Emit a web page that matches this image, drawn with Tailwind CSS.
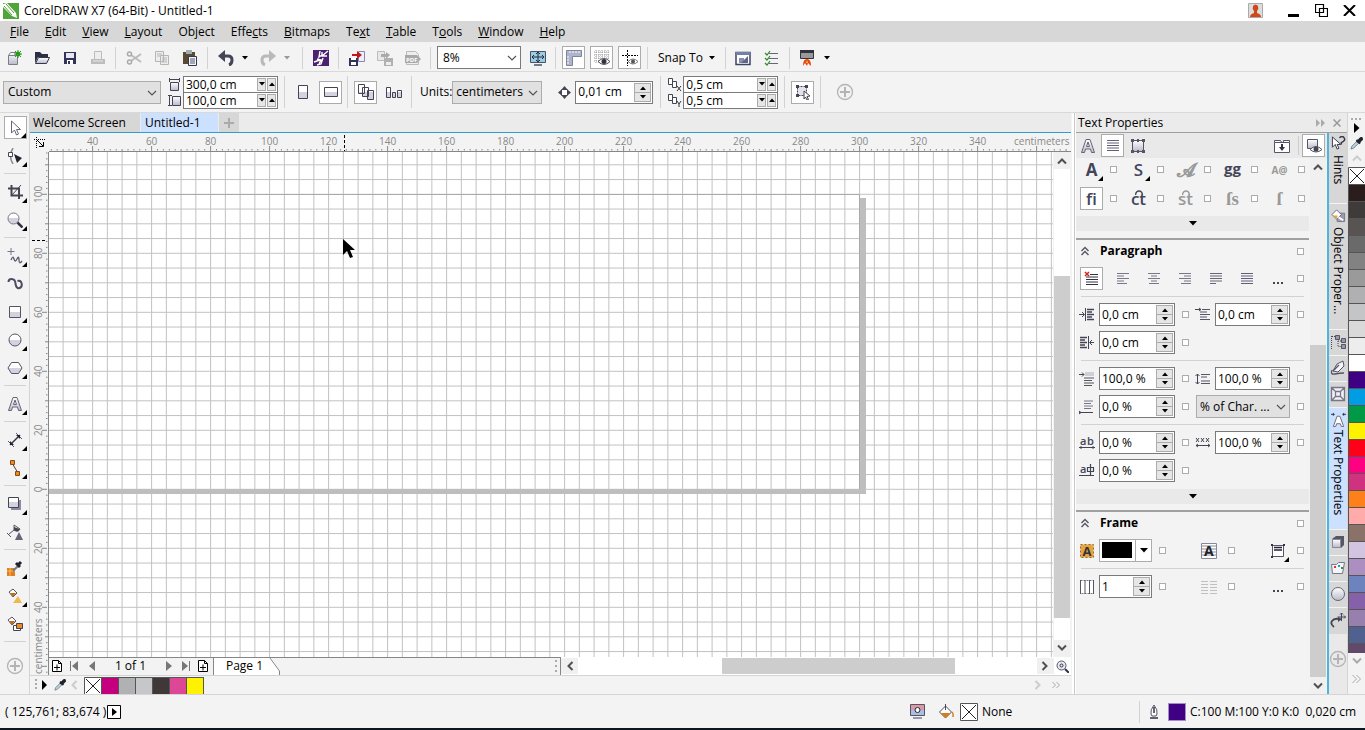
<!DOCTYPE html>
<html lang="en">
<head>
    <meta charset="utf-8">
    <meta name="viewport" content="width=device-width, initial-scale=1">
    <script src="https://cdn.jsdelivr.net/npm/@tailwindcss/browser@4"></script>
    <title>CorelDRAW X7 (64-Bit) - Untitled-1</title>
</head>

<body class="h-screen flex flex-col overflow-hidden bg-[#f3f3f3] text-black text-[12px] leading-4 font-['Open_Sans','Noto_Sans',sans-serif]">

<!-- shared glyphs -->
<svg class="absolute w-0 h-0" aria-hidden="true">
    <defs>
        <linearGradient id="metal" x1="0" y1="0" x2="0" y2="1"><stop offset=".5" stop-color="#fff"/><stop offset=".5" stop-color="#d3d3e0"/></linearGradient>
        <linearGradient id="fade" x1="0" y1="0" x2="0" y2="1"><stop offset="0" stop-color="#fff"/><stop offset="1" stop-color="#b9bac9"/></linearGradient>
        <linearGradient id="ink" x1="0" y1="0" x2="0" y2="1"><stop offset="0" stop-color="#b4b4c8"/><stop offset="1" stop-color="#3c3c50"/></linearGradient>
    </defs>
    <symbol id="chev" viewBox="0 0 10 6"><path d="M1 1l4 4 4-4" fill="none" stroke="#555" stroke-width="1.2"/></symbol>
    <symbol id="caret" viewBox="0 0 6 4"><path d="M0 0h6L3 3.600z" fill="currentColor"/></symbol>
    <symbol id="arrow" viewBox="0 0 10 8"><path d="M1 6.500l4-4 4 4" fill="none" stroke="#505050" stroke-width="2"/></symbol>
    <symbol id="fly" viewBox="0 0 5 5"><path d="M5 0v5H0z" fill="#000"/></symbol>
    <symbol id="plus" viewBox="0 0 18 18"><circle cx="9" cy="9" r="7.500" fill="none" stroke="#b4b4b4" stroke-width="1.300"/><path d="M9 4v10M4 9h10" stroke="#b4b4b4" stroke-width="2"/></symbol>
    <symbol id="drop" viewBox="0 0 14 14"><path d="M1 13l1-3 6-6 2 2-6 6z" fill="#b8d4da" stroke="#5c6b7c" stroke-width=".8"/><path d="M7 3l4 4M8 5l3-3.500q2-1.500 2 1L9.500 6z" stroke="#22222e" stroke-width="2" fill="#22222e"/></symbol>
    <symbol id="none" viewBox="0 0 18 18"><path d="M.5.500h17v17H.500z" fill="#fff" stroke="#555"/><path d="M2 2l14 14M16 2L2 16" stroke="#222"/></symbol>
    <symbol id="addpage" viewBox="0 0 10 12"><path d="M.5.500h6l3 3v8h-9zM6.500.500v3h3M5 4.500v6M2 7.500h6" fill="#fff" stroke="#000"/></symbol>
    <symbol id="bucket" viewBox="0 0 16 16"><path d="M1.500 8l6-6 6 6-6 6z" fill="#fff" stroke="#4d4d60"/><path d="M2.500 9h10l-5 5z" fill="#d87b1d"/><path d="M7.500 0v6" stroke="#4d4d60"/><path d="M14 8q1.500 1 1 5" stroke="#d87b1d" stroke-width="1.500" fill="none"/></symbol>
    <symbol id="lines" viewBox="0 0 12 11"><path d="M0 .5h12M0 3h12M0 5.500h12M0 8h12M0 10.500h12" stroke="#606078"/></symbol>
</svg>

<!-- title bar -->
<header class="flex items-center h-[21px] shrink-0 bg-white pl-[3px] pr-[9px]">
    <svg class="size-4" viewBox="0 0 16 16"><path fill="#4fa53a" d="M0 0h16v16H0z"/><path fill="#fff" d="M0 1l4-1 9 10 1 5-5-2L0 4zM9 13l2-3 3 5z"/><path d="M3 1l8 9M1 3l8 9" stroke="#4fa53a"/></svg>
    <h1 class="ml-[5px]">CorelDRAW X7 (64-Bit) - Untitled-1</h1>
    <div class="ml-auto flex items-center">
        <button aria-label="Account" class="mr-[25px]"><svg class="size-[15px]" viewBox="0 0 15 15"><path d="M.5.500h14v14H.500z" fill="#ddd" stroke="#aaa"/><path fill="#d0471c" d="M2 14q0-3 4-4V8Q4 6 5 3q2.500-3 5 0 1 3-1 5v2q4 1 4 4z"/></svg></button>
        <button aria-label="Minimize" class="mr-4"><svg class="w-[11px] h-3" viewBox="0 0 11 12"><path d="M0 9h11v3H0z"/></svg></button>
        <button aria-label="Restore" class="mr-[15px]"><svg class="w-[13px] h-[13px]" viewBox="0 0 13 13"><path d="M.5.500h8v8h-8zM4.500 4.500h8v8h-8z" fill="#fff" stroke="#000" stroke-width="1.200"/></svg></button>
        <button aria-label="Close"><svg class="w-[13px] h-[11px]" viewBox="0 0 13 11"><path d="M1 0l11 11M12 0L1 11" stroke="#000" stroke-width="2"/></svg></button>
    </div>
</header>

<nav class="flex items-center h-[21px] shrink-0 bg-[#d7d7d7] pl-[2px]">
    <button class="px-2"><u>F</u>ile</button>
    <button class="px-2"><u>E</u>dit</button>
    <button class="px-2"><u>V</u>iew</button>
    <button class="px-2"><u>L</u>ayout</button>
    <button class="px-2">Ob<u>j</u>ect</button>
    <button class="px-2">Effe<u>c</u>ts</button>
    <button class="px-2"><u>B</u>itmaps</button>
    <button class="px-2">Te<u>x</u>t</button>
    <button class="px-2"><u>T</u>able</button>
    <button class="px-2">T<u>o</u>ols</button>
    <button class="px-2"><u>W</u>indow</button>
    <button class="px-2"><u>H</u>elp</button>
</nav>

<!-- standard toolbar -->
<div class="flex items-center gap-[5px] h-[30px] shrink-0 border-b border-[#d9d9d9] pl-[2px] pt-[2px]">
    <button aria-label="New" class="grid place-items-center w-[23px] h-[23px]"><svg class="size-4" viewBox="0 0 16 16"><path d="M2.500 5.500h9v9h-9zM2.500 5.500l2-3h6" fill="url(#fade)" stroke="#7c7c8d"/><circle cx="12" cy="4" r="2.500" fill="#2a9a1f"/><path d="M12 0v8M8 4h8M9 1l6 6M15 1L9 7" stroke="#2a9a1f"/></svg></button>
    <button aria-label="Open" class="grid place-items-center w-[23px] h-[23px]"><svg class="size-4" viewBox="0 0 16 16"><path d="M1 13V2h5l2 2h6v3H4z" fill="#2a2f43"/><path d="M1.500 13.500l3-6h11l-3 6z" fill="url(#fade)" stroke="#33384d"/></svg></button>
    <button aria-label="Save" class="grid place-items-center w-[23px] h-[23px]"><svg class="size-4" viewBox="0 0 16 16"><path d="M2 2h12v12H2z" fill="#33335a"/><path fill="#e8e8f2" d="M4 3h8v5H4z"/><path fill="#fff" d="M5 10h6v4H5z"/><path fill="#33335a" d="M6 11h2v3H6z"/></svg></button>
    <button aria-label="Print" class="grid place-items-center w-[23px] h-[23px]"><svg class="size-4" viewBox="0 0 16 16"><path d="M4.500 1.500h7v8h-7z" fill="#eee" stroke="#bbb"/><path d="M1 9h14v5H1z" fill="#bdbdbd"/><path d="M3 11h10" stroke="#e8e8e8"/></svg></button>
    <i class="w-px h-[22px] mx-px bg-[#d2d2d2]"></i>
    <button aria-label="Cut" class="grid place-items-center w-[23px] h-[23px]"><svg class="size-4" viewBox="0 0 16 16"><path d="M5 5l10 7M5 11l10-7" stroke="#bbb" stroke-width="2"/><circle cx="3.500" cy="4" r="2" fill="none" stroke="#aaa" stroke-width="1.500"/><circle cx="3.500" cy="12" r="2" fill="none" stroke="#aaa" stroke-width="1.500"/></svg></button>
    <button aria-label="Copy" class="grid place-items-center w-[23px] h-[23px]"><svg class="size-4" viewBox="0 0 16 16"><path d="M1.500 1.500h8v10h-8zM6.500 5.500h8v9h-8z" fill="#eee" stroke="#b5b5b5"/><path d="M3 4h5M3 6h3M8 8h5M8 10h5M8 12h5" stroke="#b5b5b5"/></svg></button>
    <button aria-label="Paste" class="grid place-items-center w-[23px] h-[23px]"><svg class="size-4" viewBox="0 0 16 16"><path d="M1 2h12v12H1z" fill="#5b4a33"/><path d="M4 0h6v4H4z" fill="#9fb0b0"/><path d="M6.500 6.500h8v9h-8z" fill="#f4f4ff" stroke="#33384d"/><path d="M8 9h5M8 11h5M8 13h5" stroke="#556"/></svg></button>
    <i class="w-px h-[22px] mx-px bg-[#d2d2d2]"></i>
    <button aria-label="Undo" class="grid place-items-center w-[23px] h-[23px]"><svg class="size-4" viewBox="0 0 16 16"><path d="M5 6h5q4 0 4 4t-3 5" fill="none" stroke="#45455a" stroke-width="3"/><path d="M0 6l7-6v12z" fill="#45455a"/></svg></button>
    <button aria-label="Undo list" class="w-2"><svg class="w-[6px] h-1"><use href="#caret"/></svg></button>
    <button aria-label="Redo" class="grid place-items-center w-[23px] h-[23px] ml-px"><svg class="size-4" viewBox="0 0 16 16"><path d="M11 6H6q-4 0-4 4t3 5" fill="none" stroke="#b9b9b9" stroke-width="3"/><path d="M16 6L9 0v12z" fill="#b9b9b9"/></svg></button>
    <button aria-label="Redo list" class="w-2 mr-1 text-[#999]"><svg class="w-[6px] h-1"><use href="#caret"/></svg></button>
    <i class="w-px h-[22px] mx-px bg-[#d2d2d2]"></i>
    <button aria-label="Search content" class="grid place-items-center w-[23px] h-[23px]"><svg class="size-4" viewBox="0 0 16 16"><path d="M0 0h16v16H0z" fill="#4b2170"/><path d="M7 1l-1 6 3-2M15 1l-6 5M9 2v4h5M1 12l6-2M4 9l4 1-2 4M10 8l-2 6-4 1" stroke="#fff" stroke-width="1.400" fill="none"/></svg></button>
    <i class="w-px h-[22px] mx-px bg-[#d2d2d2]"></i>
    <button aria-label="Import" class="grid place-items-center w-[23px] h-[23px]"><svg class="size-4" viewBox="0 0 16 16"><path d="M9.500 1.500h6v10h-6z" fill="#eef" stroke="#88a"/><path d="M0 8h9v8H0z" fill="#33335a"/><path fill="#fff" d="M2 12h5v3H2zM2 8h5v2H2z"/><path d="M3 4h5V1l5 4-5 4V6H3z" fill="#c3161c"/></svg></button>
    <button aria-label="Export" class="grid place-items-center w-[23px] h-[23px]"><svg class="size-4" viewBox="0 0 16 16"><path d="M.5 1.500h7v9h-7z" fill="#e8e8e8" stroke="#bbb"/><path d="M7 8h9v8H7z" fill="#b0b0b0"/><path fill="#eee" d="M9 12h5v3H9z"/><path d="M4 4h5V2l4 3-4 4V7H4z" fill="#aaa"/></svg></button>
    <button aria-label="Publish to PDF" class="grid place-items-center w-[23px] h-[23px]"><svg class="size-4" viewBox="0 0 16 16"><path d="M1.500 1.500h9l3 3v10h-12z" fill="#eee" stroke="#bbb"/><path d="M0 5h12l4 4-4 4H0z" fill="#a9a9a9"/><text x="1" y="11.500" font-size="6" font-weight="700" fill="#fff">PDF</text></svg></button>
    <i class="w-px h-[22px] mx-px bg-[#d2d2d2]"></i>
    <div class="relative w-[84px]">
        <select aria-label="Zoom level" class="appearance-none block w-full h-[23px] pl-[5px] bg-white border border-[#7a7a7a]"><option>8%</option></select>
        <svg class="pointer-events-none absolute right-1 top-[9px] w-[10px] h-[6px]"><use href="#chev"/></svg>
    </div>
    <button aria-label="Full screen preview" class="grid place-items-center w-[23px] h-[23px]"><svg class="size-4" viewBox="0 0 16 16"><path d="M.5 1.500h15v11H.500z" fill="#9fcbe0" stroke="#44556a"/><path d="M4 15h8" stroke="#44556a" stroke-width="1.500"/><path d="M8 2v10M2 7h12M6 4l2-2 2 2M6 10l2 2 2-2M4 5L2 7l2 2M12 5l2 2-2 2" stroke="#1e3144" fill="none"/></svg></button>
    <i class="w-px h-[22px] mx-px bg-[#d2d2d2]"></i>
    <button aria-label="Show rulers" class="grid place-items-center w-[23px] h-[23px] bg-white border border-[#acacac]"><svg class="size-4" viewBox="0 0 16 16"><path d="M.5.500h15v6h-9v9h-6z" fill="#aeb4cb" stroke="#7e849c"/><path d="M4 1v2M7 1v2M10 1v2M13 1v2M1 7h2M1 10h2M1 13h2" stroke="#fff"/></svg></button>
    <button aria-label="Show grid" class="grid place-items-center w-[23px] h-[23px] bg-white border border-[#acacac]"><svg class="size-4" viewBox="0 0 16 16"><path d="M2 0v14M5 0v14M8 0v14M11 0v14M14 0v14M0 2h16M0 5h16M0 8h16M0 11h16" stroke="#999" stroke-dasharray="1 1"/><path d="M4 11.500q6-6 12 0-6 6-12 0" fill="#fff" stroke="#555"/><circle cx="10" cy="11.500" r="2.500" fill="#33333f"/></svg></button>
    <button aria-label="Show guidelines" class="grid place-items-center w-[23px] h-[23px] bg-white border border-[#acacac]"><svg class="size-4" viewBox="0 0 16 16"><path d="M5.500 0v16M0 5.500h16" stroke="#000" stroke-dasharray="2 1"/><path d="M6 11.500q5-5 10 0-5 5-10 0" fill="#fff" stroke="#777"/><circle cx="11" cy="11.500" r="2" fill="#555560"/></svg></button>
    <i class="w-px h-[22px] mx-px bg-[#d2d2d2]"></i>
    <button class="flex items-center gap-[6px] ml-1">Snap To <svg class="w-[6px] h-1"><use href="#caret"/></svg></button>
    <i class="w-px h-[22px] ml-[5px] mr-px bg-[#d2d2d2]"></i>
    <button aria-label="Welcome screen" class="grid place-items-center w-[23px] h-[23px]"><svg class="size-4" viewBox="0 0 16 16"><path d="M1 2.500h14v12H1z" fill="#fff" stroke="#3c4468" stroke-width="1.500"/><path d="M1 2h14v3H1z" fill="#7382a4"/><path d="M4 8h5v5H4z" fill="#8890ae"/><path d="M6 13l7-7v7z" fill="#5d678c"/></svg></button>
    <button aria-label="Options" class="grid place-items-center w-[23px] h-[23px]"><svg class="size-4" viewBox="0 0 16 16"><path d="M6 3.500h9M6 8.500h9M6 13.500h9" stroke="#667"/><path d="M2 3l2 2 3-4M2 8l2 2 3-4M2 13l2 2 3-4" fill="none" stroke="#2d8a2a" stroke-width="1.200"/></svg></button>
    <i class="w-px h-[22px] mx-px bg-[#d2d2d2]"></i>
    <button aria-label="Application launcher" class="grid place-items-center w-[23px] h-[23px]"><svg class="size-4" viewBox="0 0 16 16"><path d="M1.500.500h13v8h-13z" fill="#999" stroke="#33333f"/><path d="M1 0h14v3H1z" fill="#33333f"/><path d="M4 16q0-7 4-7t4 7l-3-3-1 3-2-3z" fill="#e8420e"/><path d="M7 13l1-3 1 3z" fill="#ffd23c"/></svg></button>
    <button aria-label="Launcher list" class="w-2"><svg class="w-[6px] h-1"><use href="#caret"/></svg></button>
</div>

<!-- property bar -->
<div class="flex items-center h-[41px] shrink-0 border-b border-[#d9d9d9] pl-[3px]">
    <div class="relative w-[158px]">
        <select aria-label="Page size" class="appearance-none block w-full h-[23px] pl-[4px] bg-[#e1e1e1] border border-[#acacac]"><option>Custom</option></select>
        <svg class="pointer-events-none absolute right-1 top-[9px] w-[10px] h-[6px]"><use href="#chev"/></svg>
    </div>
    <div class="ml-[7px] flex flex-col gap-[3px] w-[15px]">
        <svg class="w-[13px] h-[13px]" viewBox="0 0 13 13"><path d="M2.500 4.500h8v8h-8z" fill="url(#fade)" stroke="#445"/><path d="M1.500 0v4M11.500 0v4M2 1.500h9" stroke="#445" fill="none"/></svg>
        <svg class="w-[13px] h-[13px]" viewBox="0 0 13 13"><path d="M4.500 2.500h8v9h-8z" fill="url(#fade)" stroke="#445"/><path d="M0 1.500h4M0 11.500h4M1.500 2v9" stroke="#445" fill="none"/></svg>
    </div>
    <div class="w-[95px] border border-[#7a7a7a] bg-[#7a7a7a] flex flex-col gap-px">
        <div class="flex h-[15px] bg-white"><input aria-label="Page width" value="300,0 cm" class="min-w-0 flex-1 pl-[2px] leading-[15px]"><span class="flex" data-step="side"></span></div>
        <div class="flex h-[15px] bg-white"><input aria-label="Page height" value="100,0 cm" class="min-w-0 flex-1 pl-[2px] leading-[15px]"><span class="flex" data-step="side"></span></div>
    </div>
    <i class="w-px h-8 ml-[6px] bg-[#d2d2d2]"></i>
    <button aria-label="Portrait" class="grid place-items-center w-[23px] h-[23px] ml-[6px]"><svg class="w-[10px] h-[14px]" viewBox="0 0 10 14"><path d="M.5.500h9v13h-9z" fill="url(#metal)" stroke="#445"/></svg></button>
    <button aria-label="Landscape" class="grid place-items-center w-[23px] h-[23px] ml-[5px] bg-white border border-[#acacac]"><svg class="w-[14px] h-[10px]" viewBox="0 0 14 10"><path d="M.5.500h13v9H.500z" fill="url(#metal)" stroke="#445"/></svg></button>
    <i class="w-px h-8 ml-[5px] bg-[#d2d2d2]"></i>
    <button aria-label="All pages" class="grid place-items-center w-[23px] h-[23px] ml-[6px] bg-white border border-[#acacac]"><svg class="size-4" viewBox="0 0 16 16"><path d="M.5.500h6v9h-6zM4.500 3.500h6v9h-6zM9.500 6.500h6v9h-6z" fill="url(#metal)" stroke="#445"/></svg></button>
    <button aria-label="Current page" class="grid place-items-center w-[23px] h-[23px] ml-[5px]"><svg class="size-4" viewBox="0 0 16 16"><path d="M.5 3.500h4v10h-4zM6.500 8.500h3v5h-3zM11.500 6.500h4v7h-4z" fill="url(#metal)" stroke="#445"/></svg></button>
    <i class="w-px h-8 ml-[6px] bg-[#d2d2d2]"></i>
    <label for="units" class="ml-2">Units:</label>
    <div class="relative w-[90px]">
        <select id="units" class="appearance-none block w-full h-[23px] pl-[3px] bg-[#e1e1e1] border border-[#acacac]"><option>centimeters</option></select>
        <svg class="pointer-events-none absolute right-1 top-[9px] w-[10px] h-[6px]"><use href="#chev"/></svg>
    </div>
    <svg class="ml-4 w-[13px] h-[13px]" viewBox="0 0 13 13"><path d="M3.500 3.500h6v6h-6z" fill="#fff" stroke="#445"/><path d="M6.500 0l2.500 3H4zM6.500 13L4 10h5zM0 6.500L3 4v5zM13 6.500L10 9V4z" fill="#445"/></svg>
    <div class="ml-1 flex w-[78px] h-[23px] border border-[#7a7a7a] bg-white"><input aria-label="Nudge distance" value="0,01 cm" class="min-w-0 flex-1 pl-[2px]"><span class="flex flex-col" data-step="stack"></span></div>
    <i class="w-px h-8 ml-[7px] bg-[#d2d2d2]"></i>
    <div class="ml-[7px] flex flex-col gap-[3px] w-[15px]">
        <svg class="w-[14px] h-[13px]" viewBox="0 0 14 13"><path d="M.5.500h4v6h-4zM4.500 3.500h4v6h-4z" fill="#fff" stroke="#445"/><path d="M9 8l4 5M13 8l-4 5" stroke="#334"/></svg>
        <svg class="w-[14px] h-[13px]" viewBox="0 0 14 13"><path d="M.5.500h4v6h-4zM4.500 3.500h4v6h-4z" fill="#fff" stroke="#445"/><path d="M9 7l2 3 2-3M11 10v3" stroke="#334" fill="none"/></svg>
    </div>
    <div class="w-[95px] border border-[#7a7a7a] bg-[#7a7a7a] flex flex-col gap-px">
        <div class="flex h-[15px] bg-white"><input aria-label="Duplicate X" value="0,5 cm" class="min-w-0 flex-1 pl-[2px] leading-[15px]"><span class="flex" data-step="side"></span></div>
        <div class="flex h-[15px] bg-white"><input aria-label="Duplicate Y" value="0,5 cm" class="min-w-0 flex-1 pl-[2px] leading-[15px]"><span class="flex" data-step="side"></span></div>
    </div>
    <i class="w-px h-8 ml-[6px] bg-[#d2d2d2]"></i>
    <button aria-label="Treat as filled" class="grid place-items-center w-[23px] h-[23px] ml-[6px] bg-white border border-[#acacac]"><svg class="size-4" viewBox="0 0 16 16"><path d="M2.500 2.500h9v9h-9z" fill="#e3e3ec" stroke="#445" stroke-dasharray="2 1"/><path d="M1 1h3v3H1zM10 1h3v3h-3zM1 10h3v3H1z" fill="#445"/><path d="M9 7l6 5-3 .5 1.500 3-1.500.5L10.500 13 9 15z" fill="#fff" stroke="#445"/></svg></button>
    <i class="w-px h-8 ml-[6px] bg-[#d2d2d2]"></i>
    <button aria-label="Quick customize" class="ml-[15px]"><svg class="size-[18px]"><use href="#plus"/></svg></button>
</div>

<main class="flex flex-1 min-h-0">
    <!-- toolbox -->
    <div class="flex flex-col items-center gap-[5px] w-[30px] shrink-0 border-r border-[#d4d4d4] pt-[3px] pl-px">
        <button aria-label="Pick" class="relative grid place-items-center w-[23px] h-[23px] shrink-0 bg-white border border-[#acacac]"><svg class="size-4" viewBox="0 0 16 16"><path d="M4.500 1v12l3-3 2 5 2-1-2-4.500h4z" fill="#fff" stroke="#667"/></svg><svg class="absolute right-0 bottom-0 size-[5px]"><use href="#fly"/></svg></button>
        <button aria-label="Shape" class="relative grid place-items-center w-[23px] h-[23px] shrink-0"><svg class="size-4" viewBox="0 0 16 16"><path d="M6 0Q1 8 6 16" fill="none" stroke="#889" stroke-width="1.500"/><path d="M1.500 4.500h4v4h-4z" fill="#fff" stroke="#445"/><path d="M7 6l8 4-5 5z" fill="#22222e"/></svg><svg class="absolute right-0 bottom-0 size-[5px]"><use href="#fly"/></svg></button>
        <i class="w-[22px] h-px my-px shrink-0 bg-[#d2d2d2]"></i>
        <button aria-label="Crop" class="relative grid place-items-center w-[23px] h-[23px] shrink-0"><svg class="size-4" viewBox="0 0 16 16"><path d="M1 4.500h11V15M4.500 1v10.500H16" fill="none" stroke="#445" stroke-width="2"/><path d="M14 1L5 11" stroke="#445"/></svg><svg class="absolute right-0 bottom-0 size-[5px]"><use href="#fly"/></svg></button>
        <button aria-label="Zoom" class="relative grid place-items-center w-[23px] h-[23px] shrink-0"><svg class="size-4" viewBox="0 0 16 16"><circle cx="6.500" cy="6.500" r="5.500" fill="url(#metal)" stroke="#778"/><path d="M10.500 10.500l5 5" stroke="#334" stroke-width="2.500"/></svg><svg class="absolute right-0 bottom-0 size-[5px]"><use href="#fly"/></svg></button>
        <i class="w-[22px] h-px my-px shrink-0 bg-[#d2d2d2]"></i>
        <button aria-label="Freehand" class="relative grid place-items-center w-[23px] h-[23px] shrink-0"><svg class="size-4" viewBox="0 0 16 16"><path d="M4 0v7M.5 3.500h7" stroke="#778"/><path d="M4 12q2-5 3-1t3 0 2 1 3 1" fill="none" stroke="#556" stroke-width="1.300"/></svg><svg class="absolute right-0 bottom-0 size-[5px]"><use href="#fly"/></svg></button>
        <button aria-label="Artistic media" class="grid place-items-center w-[23px] h-[23px] shrink-0"><svg class="size-4" viewBox="0 0 16 16"><path d="M1.500 6q0-3 3-3 4 0 4 5 1 5 4 4 3-1 2-5-1-3-4-2" fill="none" stroke="#4d4d60" stroke-width="2"/></svg></button>
        <button aria-label="Rectangle" class="relative grid place-items-center w-[23px] h-[23px] shrink-0"><svg class="size-4" viewBox="0 0 16 16"><path d="M2.500 2.500h11v11h-11z" fill="url(#metal)" stroke="#556"/></svg><svg class="absolute right-0 bottom-0 size-[5px]"><use href="#fly"/></svg></button>
        <button aria-label="Ellipse" class="relative grid place-items-center w-[23px] h-[23px] shrink-0"><svg class="size-4" viewBox="0 0 16 16"><circle cx="8" cy="8" r="6" fill="url(#metal)" stroke="#556"/></svg><svg class="absolute right-0 bottom-0 size-[5px]"><use href="#fly"/></svg></button>
        <button aria-label="Polygon" class="relative grid place-items-center w-[23px] h-[23px] shrink-0"><svg class="size-4" viewBox="0 0 16 16"><path d="M1 8l3.500-5.500h7L15 8l-3.500 5.500h-7z" fill="url(#metal)" stroke="#556"/></svg><svg class="absolute right-0 bottom-0 size-[5px]"><use href="#fly"/></svg></button>
        <i class="w-[22px] h-px my-px shrink-0 bg-[#d2d2d2]"></i>
        <button aria-label="Text" class="relative grid place-items-center w-[23px] h-[23px] shrink-0"><svg class="size-4" viewBox="0 0 16 16"><path d="M1.500 14.500L6 1.500h4l4.500 13h-3L10.500 11h-5l-1 3.500zM6.500 8.500h3L8 4z" fill="url(#fade)" stroke="#667"/></svg><svg class="absolute right-0 bottom-0 size-[5px]"><use href="#fly"/></svg></button>
        <i class="w-[22px] h-px my-px shrink-0 bg-[#d2d2d2]"></i>
        <button aria-label="Dimension" class="relative grid place-items-center w-[23px] h-[23px] shrink-0"><svg class="size-4" viewBox="0 0 16 16"><path d="M3 13L13 3" stroke="#33333f" stroke-width="1.500"/><path d="M1 9l6 6M9 1l6 6" stroke="#556"/><path d="M3 13v-4l4 4zM13 3v4L9 3z" fill="#22222e"/></svg><svg class="absolute right-0 bottom-0 size-[5px]"><use href="#fly"/></svg></button>
        <button aria-label="Connector" class="relative grid place-items-center w-[23px] h-[23px] shrink-0"><svg class="size-4" viewBox="0 0 16 16"><path d="M5 3l6 10" stroke="#445"/><path d="M3.500.500h4v4h-4zM8.500 11.500h4v4h-4z" fill="#e88a25" stroke="#8a4a0f"/></svg><svg class="absolute right-0 bottom-0 size-[5px]"><use href="#fly"/></svg></button>
        <i class="w-[22px] h-px my-px shrink-0 bg-[#d2d2d2]"></i>
        <button aria-label="Drop shadow" class="relative grid place-items-center w-[23px] h-[23px] shrink-0"><svg class="size-4" viewBox="0 0 16 16"><path d="M4 4h10v10H4z" fill="#8a8aa3"/><path d="M1.500 1.500h10v10h-10z" fill="url(#metal)" stroke="#445"/></svg><svg class="absolute right-0 bottom-0 size-[5px]"><use href="#fly"/></svg></button>
        <button aria-label="Transparency" class="grid place-items-center w-[23px] h-[23px] shrink-0"><svg class="size-4" viewBox="0 0 16 16"><path d="M7 1l6 4q-2 4-6 1zM7 6l-5 4M0 9l4 4" fill="#fff" stroke="#556"/><path d="M7 3l6 2q-2 4-6 1z" fill="#445"/><path d="M12 8l4 8H8z" fill="#667"/></svg></button>
        <i class="w-[22px] h-px my-px shrink-0 bg-[#d2d2d2]"></i>
        <button aria-label="Color eyedropper" class="relative grid place-items-center w-[23px] h-[23px] shrink-0"><svg class="size-4" viewBox="0 0 16 16"><path d="M0 8h8v8H0z" fill="#e07f1b"/><path d="M3 8v8M0 11h8" stroke="#f8b566"/><path d="M6 11l5-5" stroke="#778" stroke-width="2"/><path d="M9 3l4 4M11 5l3-3" stroke="#22222e" stroke-width="3"/></svg><svg class="absolute right-0 bottom-0 size-[5px]"><use href="#fly"/></svg></button>
        <button aria-label="Interactive fill" class="relative grid place-items-center w-[23px] h-[23px] shrink-0"><svg class="size-4" viewBox="0 0 16 16"><path d="M2 4l4-3 4 4-4 4z" fill="#fff" stroke="#556"/><path d="M3 5h6L6 9z" fill="#c46a1a"/><path d="M11 8l4 7H6z" fill="#f0b94c"/></svg><svg class="absolute right-0 bottom-0 size-[5px]"><use href="#fly"/></svg></button>
        <button aria-label="Smart fill" class="grid place-items-center w-[23px] h-[23px] shrink-0"><svg class="size-4" viewBox="0 0 16 16"><path d="M1 4l4-3 4 4-4 4z" fill="#fff" stroke="#556"/><path d="M2 5h6L5 9z" fill="#c46a1a"/><path d="M6.500 9.500h7v5h-7z" fill="#fff" stroke="#445"/><path d="M9.500 7.500h6v5h-6z" fill="#e88a25" stroke="#445"/></svg></button>
        <i class="w-[22px] h-px my-px shrink-0 bg-[#d2d2d2]"></i>
        <button aria-label="Customize toolbox" class="mt-[9px]"><svg class="size-[18px]"><use href="#plus"/></svg></button>
    </div>

    <!-- document -->
    <section class="flex flex-col flex-1 min-w-0">
        <div class="flex h-5 shrink-0 bg-[#ebebeb] border-b border-[#2b9fd0]">
            <button class="w-[111px] pl-[3px] text-left bg-[#d7d7d7] border-r border-[#ebebeb]">Welcome Screen</button>
            <button class="w-[77px] pl-1 text-left bg-[#cce0ff]">Untitled-1</button>
            <button aria-label="New document" class="grid place-items-center w-[21px] bg-[#d7d7d7] border-l border-[#ebebeb]"><svg class="size-[10px]" viewBox="0 0 10 10"><path d="M5 0v10M0 5h10" stroke="#aaa" stroke-width="2"/></svg></button>
        </div>
        <div class="grid grid-cols-[19px_minmax(0,1fr)_18px] grid-rows-[19px_minmax(0,1fr)] flex-1 min-h-0">
            <div class="grid place-items-center"><svg class="size-[11px]" viewBox="0 0 11 11"><path d="M2.500 0v11M0 2.500h11" stroke="#000" stroke-dasharray="1 1"/><path d="M3 3l6 6M9.500 5v4.500H5" stroke="#000" fill="none"/></svg></div>
            <div class="col-span-2 border-b border-[#868686] overflow-hidden"><svg id="hruler" class="w-full h-full text-[10px]"></svg></div>
            <div class="border-r border-[#868686] overflow-hidden row-span-2"><svg id="vruler" class="w-full h-full text-[10px]"></svg></div>
            <div class="relative bg-white overflow-hidden">
                <svg id="canvas" class="absolute inset-0 w-full h-full"></svg>
                <svg class="absolute left-[294px] top-[87px] w-3 h-5" viewBox="0 0 12 20"><path d="M0 0v16l4-4 3 7 3-1-3-7h5z"/></svg>
            </div>
            <div class="flex flex-col items-center w-4 ml-px bg-white">
                <button aria-label="Scroll up" class="grid place-items-center w-4 h-[17px] shrink-0 bg-[#f0f0f0]"><svg class="w-[10px] h-2"><use href="#arrow"/></svg></button>
                <div class="w-full grow-[107] basis-0"></div>
                <div class="w-full grow-[343] basis-0 bg-[#cdcdcd]"></div>
                <div class="w-full grow-[22] basis-0"></div>
                <button aria-label="Scroll down" class="grid place-items-center w-4 h-[17px] shrink-0 bg-[#f0f0f0]"><svg class="w-[10px] h-2 rotate-180"><use href="#arrow"/></svg></button>
            </div>
            <div class="col-start-2 col-span-2 flex h-[18px] bg-[#f3f3f3]">
                <div class="flex items-center w-[512px] shrink-0 border-t border-r border-[#868686] pl-[3px] pb-px">
                    <button aria-label="Add page before"><svg class="w-[10px] h-3"><use href="#addpage"/></svg></button>
                    <button aria-label="First page" class="ml-2"><svg class="w-2 h-[10px]" viewBox="0 0 8 10"><path d="M.5 0v10" stroke="#777"/><path d="M8 0v10L2 5z" fill="#777"/></svg></button>
                    <button aria-label="Previous page" class="ml-[11px]"><svg class="w-[6px] h-[10px]" viewBox="0 0 6 10"><path d="M6 0v10L0 5z" fill="#777"/></svg></button>
                    <span class="w-[71px] text-center">1 of 1</span>
                    <button aria-label="Next page"><svg class="w-[6px] h-[10px]" viewBox="0 0 6 10"><path d="M0 0v10l6-5z" fill="#777"/></svg></button>
                    <button aria-label="Last page" class="ml-[10px]"><svg class="w-2 h-[10px]" viewBox="0 0 8 10"><path d="M7.500 0v10" stroke="#777"/><path d="M0 0v10l6-5z" fill="#777"/></svg></button>
                    <button aria-label="Add page after" class="ml-2"><svg class="w-[10px] h-3"><use href="#addpage"/></svg></button>
                    <button class="relative ml-[5px] w-[67px] h-[17px] pr-1"><svg class="absolute inset-0 w-full h-full" viewBox="0 0 67 17"><path d="M.5 0v17h66V12L58 0z" fill="#fff"/><path d="M.5 0v17M57 0l9.500 13v4" fill="none" stroke="#868686"/></svg><span class="relative">Page 1</span></button>
                    <svg class="ml-auto mr-[3px] w-[2px] h-3" viewBox="0 0 2 12"><path d="M1 0v12" stroke="#aaa" stroke-width="2" stroke-dasharray="2 3"/></svg>
                </div>
                <div class="flex flex-1 bg-white pt-px">
                    <button aria-label="Scroll left" class="grid place-items-center w-[17px] h-4 bg-[#f0f0f0]"><svg class="w-[10px] h-2 -rotate-90"><use href="#arrow"/></svg></button>
                    <div class="grow-[144] basis-0"></div>
                    <div class="grow-[232] basis-0 h-4 bg-[#cdcdcd]"></div>
                    <div class="grow-[82] basis-0"></div>
                    <button aria-label="Scroll right" class="grid place-items-center w-[17px] h-4 bg-[#f0f0f0]"><svg class="w-[10px] h-2 rotate-90"><use href="#arrow"/></svg></button>
                    <button aria-label="Navigator" class="grid place-items-center w-[17px] h-4"><svg class="size-[13px]" viewBox="0 0 13 13"><circle cx="5.500" cy="5.500" r="4.500" fill="#e8e8f2" stroke="#556"/><circle cx="5.500" cy="5.500" r="1.500" fill="none" stroke="#334"/><path d="M9 9l4 4" stroke="#334" stroke-width="2"/></svg></button>
                </div>
            </div>
        </div>
        <!-- document palette -->
        <div class="flex items-center h-[19px] shrink-0 border-t border-[#d4d4d4] pl-[5px] pr-[11px]">
            <svg class="w-[2px] h-3" viewBox="0 0 2 12"><path d="M1 0v12" stroke="#aaa" stroke-width="2" stroke-dasharray="2 2"/></svg>
            <button aria-label="Palette menu" class="ml-[5px]"><svg class="w-[5px] h-[10px]" viewBox="0 0 5 10"><path d="M0 0v10l5-5z"/></svg></button>
            <button aria-label="Pick color" class="ml-[7px]"><svg class="size-3"><use href="#drop"/></svg></button>
            <button aria-label="Scroll palette left" class="ml-1"><svg class="w-2 h-[10px]" viewBox="0 0 8 10"><path d="M6.500 1l-4 4 4 4" fill="none" stroke="#ccc" stroke-width="2"/></svg></button>
            <div id="docpalette" class="flex ml-[6px]"></div>
            <button aria-label="Scroll palette right" class="ml-auto"><svg class="w-2 h-[10px]" viewBox="0 0 8 10"><path d="M1.500 1l4 4-4 4" fill="none" stroke="#ccc" stroke-width="2"/></svg></button>
            <button aria-label="Expand palette" class="ml-[10px]"><svg class="w-2 h-2" viewBox="0 0 8 8"><path d="M.5 1l3 3-3 3M4.500 1l3 3-3 3" fill="none" stroke="#aaa"/></svg></button>
        </div>
    </section>

    <div class="w-[5px] shrink-0 bg-white border-l border-[#f3f3f3] flex justify-center"><i class="w-px bg-[#c8c8c8]"></i></div>

    <!-- docker -->
    <aside class="flex flex-col w-[271px] shrink-0">
        <div class="flex items-center h-5 shrink-0 bg-[#ebebeb] border-b border-[#a0a0a0] pl-[2px] pr-[6px]">
            <h2>Text Properties</h2>
            <button aria-label="Collapse docker" class="ml-auto"><svg class="w-[9px] h-2" viewBox="0 0 9 8"><path d="M0 0l4 4-4 4zM5 0l4 4-4 4z" fill="#aaa"/></svg></button>
            <button aria-label="Close docker" class="ml-2"><svg class="w-2 h-2" viewBox="0 0 8 8"><path d="M.5.500l7 7M7.500.500l-7 7" stroke="#999" stroke-width="1.500"/></svg></button>
        </div>
        <div class="flex flex-1 min-h-0">
            <div class="flex flex-col flex-1 min-w-0">
                <div class="flex items-center gap-[2px] h-[25px] shrink-0 bg-[#e9e9e9]">
                    <button aria-label="Character" class="grid place-items-center w-[23px] h-[23px]"><svg class="size-4" viewBox="0 0 16 16"><path d="M1.500 14.500L6 1.500h4l4.500 13h-3L10.500 11h-5l-1 3.500zM6.500 8.500h3L8 4z" fill="url(#fade)" stroke="#667"/></svg></button>
                    <button aria-label="Paragraph" class="grid place-items-center w-[23px] h-[23px] bg-white border border-[#acacac]"><svg class="w-3 h-[11px]"><use href="#lines"/></svg></button>
                    <button aria-label="Frame" class="grid place-items-center w-[23px] h-[23px]"><svg class="size-4" viewBox="0 0 16 16"><path d="M2.500 2.500h11v11h-11z" fill="url(#fade)" stroke="#556"/><path d="M1 1h3v3H1zM12 1h3v3h-3zM1 12h3v3H1zM12 12h3v3h-3zM7 1h2v3H7zM7 12h2v3H7z" fill="#556"/></svg></button>
                    <button aria-label="Import styles" class="ml-auto mr-[3px] grid place-items-center w-[23px] h-[23px]"><svg class="size-4" viewBox="0 0 16 16"><path d="M.5 4.500h15v10H.500zM.5 4.500v-2h6l1 2M9.500 4.500v-2h6v2" fill="#fff" stroke="#556"/><path d="M8 6v4" stroke="#334" stroke-width="2"/><path d="M5 9h6l-3 4z" fill="#334"/></svg></button>
                    <i class="w-px h-[19px] bg-[#ccc]"></i>
                    <button aria-label="Preview" class="grid place-items-center w-[23px] h-[23px] ml-px mr-[2px] bg-white border border-[#acacac]"><svg class="size-4" viewBox="0 0 16 16"><path d="M1.500 1.500h10v9h-10z" fill="url(#fade)" stroke="#556"/><path d="M4 11.500q6-6 12 0-6 5-12 0" fill="#fff" stroke="#556"/><circle cx="10" cy="11" r="2.500" fill="#445"/></svg></button>
                </div>
                <div class="flex flex-1 min-h-0">
                    <div class="flex flex-col flex-1 min-w-0">
                        <div class="flex h-[23px] pl-1 shrink-0 text-[#45455a] text-[17px] font-bold">
                            <div class="flex items-center gap-[7px] w-[47px] shrink-0"><button class="relative w-[23px] h-[23px]">A<svg class="absolute right-0 bottom-0 size-[5px]"><use href="#fly"/></svg></button><i data-box></i></div>
                            <div class="flex items-center gap-[7px] w-[47px] shrink-0"><button class="relative w-[23px] h-[23px] font-semibold">S<svg class="absolute right-0 bottom-0 size-[5px]"><use href="#fly"/></svg></button><i data-box></i></div>
                            <div class="flex items-center gap-[7px] w-[47px] shrink-0"><button class="w-[23px] h-[23px] text-[19px] text-[#999]">𝓐</button><i data-box></i></div>
                            <div class="flex items-center gap-[7px] w-[47px] shrink-0"><button class="w-[23px] h-[23px] text-[15px] pb-[3px]">gg</button><i data-box></i></div>
                            <div class="flex items-center gap-[7px] w-[47px] shrink-0"><button class="w-[23px] h-[23px] text-[10px] text-[#999]">A@</button><i data-box></i></div>
                        </div>
                        <div class="flex h-[23px] mt-[6px] pl-1 shrink-0 text-[#45455a] text-[17px] font-semibold">
                            <div class="flex items-center gap-[7px] w-[47px] shrink-0"><button class="w-[23px] h-[23px] bg-white border border-[#acacac]">ﬁ</button><i data-box></i></div>
                            <div class="flex items-center gap-[7px] w-[47px] shrink-0"><button class="relative w-[23px] h-[23px]">ct<svg class="absolute left-2 top-[3px] w-2 h-[6px]" viewBox="0 0 8 6"><path d="M.5 5Q1 1 4 1t3.500 4" fill="none" stroke="#45455a" stroke-width="1.300"/></svg></button><i data-box></i></div>
                            <div class="flex items-center gap-[7px] w-[47px] shrink-0"><button class="relative w-[23px] h-[23px] text-[#999]">st<svg class="absolute left-2 top-[3px] w-2 h-[6px]" viewBox="0 0 8 6"><path d="M.5 5Q1 1 4 1t3.500 4" fill="none" stroke="#999" stroke-width="1.300"/></svg></button><i data-box></i></div>
                            <div class="flex items-center gap-[7px] w-[47px] shrink-0"><button class="w-[23px] h-[23px] text-[19px] font-bold text-[#999] font-['Liberation_Serif',serif]">ſs</button><i data-box></i></div>
                            <div class="flex items-center gap-[7px] w-[47px] shrink-0"><button class="w-[23px] h-[23px] text-[19px] font-bold text-[#999] font-['Liberation_Serif',serif]">ſ</button><i data-box></i></div>
                        </div>
                        <button aria-label="More character options" class="grid place-items-center mt-[6px] h-[15px] shrink-0 bg-[#e9e9e9]"><svg class="w-2 h-[5px]" viewBox="0 0 8 5"><path d="M0 0h8L4 4.500z"/></svg></button>

                        <h3 class="flex items-center mt-[7px] h-6 shrink-0 border-t-2 border-[#a0a0a0] pl-[5px] pr-[5px] font-bold"><svg class="w-2 h-[10px] mr-[11px]" viewBox="0 0 8 10"><path d="M.5 5L4 1.500 7.500 5M.5 9L4 5.500 7.500 9" fill="none" stroke="#556" stroke-width="1.400"/></svg>Paragraph<i data-box class="ml-auto"></i></h3>
                        <div class="flex items-center gap-2 h-[23px] mt-[5px] pl-1 shrink-0">
                            <button aria-label="No alignment" class="grid place-items-center w-[23px] h-[23px] shrink-0 bg-white border border-[#acacac]"><svg class="size-4" viewBox="0 0 16 16"><path d="M6 3.500h8M2 6h12M2 8.500h12M2 11h12M2 13.500h12" stroke="#334"/><path d="M1 1l4 4M5 1L1 5" stroke="#d0281c" stroke-width="1.500"/></svg></button>
                            <button aria-label="Left" class="grid place-items-center w-[23px] h-[23px] shrink-0"><svg class="w-3 h-[11px]" viewBox="0 0 12 11"><path d="M0 .5h12M0 3h7M0 5.500h12M0 8h7M0 10.500h10" stroke="#778"/></svg></button>
                            <button aria-label="Center" class="grid place-items-center w-[23px] h-[23px] shrink-0"><svg class="w-3 h-[11px]" viewBox="0 0 12 11"><path d="M0 .5h12M3 3h6M0 5.500h12M3 8h6M1 10.500h10" stroke="#778"/></svg></button>
                            <button aria-label="Right" class="grid place-items-center w-[23px] h-[23px] shrink-0"><svg class="w-3 h-[11px]" viewBox="0 0 12 11"><path d="M0 .5h12M5 3h7M0 5.500h12M5 8h7M2 10.500h10" stroke="#778"/></svg></button>
                            <button aria-label="Full justify" class="grid place-items-center w-[23px] h-[23px] shrink-0"><svg class="w-3 h-[11px]" viewBox="0 0 12 11"><path d="M0 .5h12M0 3h12M0 5.500h12M0 8h12M0 10.500h6" stroke="#667"/></svg></button>
                            <button aria-label="Force justify" class="grid place-items-center w-[23px] h-[23px] shrink-0"><svg class="w-3 h-[11px]"><use href="#lines"/></svg></button>
                            <button aria-label="Alignment settings" class="grid place-items-center w-[23px] h-[23px] shrink-0"><svg class="w-[10px] h-[2px] mt-2" viewBox="0 0 10 2"><path d="M0 0h2v2H0zM4 0h2v2H4zM8 0h2v2H8z" fill="#445"/></svg></button>
                            <i data-box></i>
                        </div>
                        <hr class="my-[6px] mx-[5px] border-[#d2d2d2] shrink-0">
                        <div class="grid grid-cols-[20px_83px_13px_20px_82px_7px] gap-y-[5px] items-center pl-[3px] shrink-0">
                            <svg class="size-4" viewBox="0 0 16 16"><path d="M0 7.500h5M3 5l2.500 2.500L3 10M6.500 1v13" fill="none" stroke="#445"/><path d="M8 2.500h7M8 5h5M8 7.500h7M8 10h5M8 12.500h7" stroke="#445" stroke-width="1.400"/></svg>
                            <div class="flex w-[76px] h-[23px] border border-[#7a7a7a] bg-white"><input aria-label="Left indent" value="0,0 cm" class="min-w-0 flex-1 pl-[2px]"><span class="flex flex-col" data-step="stack"></span></div><i data-box></i>
                            <svg class="size-4" viewBox="0 0 16 16"><path d="M0 2.500h6M4 1l2 1.500L4 4" stroke="#445" fill="none"/><path d="M7 2.500h8M5 5h7M5 7.500h10M5 10h7M5 12.500h10" stroke="#556"/></svg>
                            <div class="flex w-[75px] h-[23px] border border-[#7a7a7a] bg-white"><input aria-label="First line indent" value="0,0 cm" class="min-w-0 flex-1 pl-[2px]"><span class="flex flex-col" data-step="stack"></span></div><i data-box></i>
                            <svg class="size-4" viewBox="0 0 16 16"><path d="M15 7.500h-4M13 5l-2.500 2.500L13 10M9.500 1v13" fill="none" stroke="#445"/><path d="M1 2.500h7M1 5h5M1 7.500h7M1 10h5M1 12.500h7" stroke="#445" stroke-width="1.400"/></svg>
                            <div class="flex w-[76px] h-[23px] border border-[#7a7a7a] bg-white"><input aria-label="Right indent" value="0,0 cm" class="min-w-0 flex-1 pl-[2px]"><span class="flex flex-col" data-step="stack"></span></div><i data-box></i>
                        </div>
                        <hr class="my-[6px] mx-[5px] border-[#d2d2d2] shrink-0">
                        <div class="grid grid-cols-[20px_83px_13px_20px_82px_7px] gap-y-[5px] items-center pl-[3px] shrink-0">
                            <svg class="size-4" viewBox="0 0 16 16"><path d="M0 3.500h5M3 1.500l2 2-2 2" stroke="#445" fill="none"/><path d="M6 2h9M6 4h9" stroke="#aab"/><path d="M5 7h10M5 9.500h8M5 12h10M5 14.500h8" stroke="#556"/></svg>
                            <div class="flex w-[76px] h-[23px] border border-[#7a7a7a] bg-white"><input aria-label="Before paragraph" value="100,0 %" class="min-w-0 flex-1 pl-[2px]"><span class="flex flex-col" data-step="stack"></span></div><i data-box></i>
                            <svg class="size-4" viewBox="0 0 16 16"><path d="M2.500 3v10M.5 5l2-2 2 2M.5 11l2 2 2-2" stroke="#445" fill="none"/><path d="M6 3.500h9M6 6h6M6 10h9M6 12.500h9" stroke="#556"/></svg>
                            <div class="flex w-[75px] h-[23px] border border-[#7a7a7a] bg-white"><input aria-label="Line spacing" value="100,0 %" class="min-w-0 flex-1 pl-[2px]"><span class="flex flex-col" data-step="stack"></span></div><i data-box></i>
                            <svg class="size-4" viewBox="0 0 16 16"><path d="M5 2h9M5 4.500h7M5 7h9M5 9.500h7" stroke="#778"/><path d="M0 13.500h14M0 12l2 1.500L0 15" stroke="#445" fill="none"/></svg>
                            <div class="flex w-[76px] h-[23px] border border-[#7a7a7a] bg-white"><input aria-label="After paragraph" value="0,0 %" class="min-w-0 flex-1 pl-[2px]"><span class="flex flex-col" data-step="stack"></span></div><i data-box></i>
                            <div class="relative col-span-2 w-[94px] ml-px"><select aria-label="Spacing units" class="appearance-none block w-full h-[23px] pl-[3px] bg-[#e1e1e1] border border-[#acacac]"><option>% of Char. ...</option></select><svg class="pointer-events-none absolute right-1 top-[9px] w-[10px] h-[6px]"><use href="#chev"/></svg></div><i data-box></i>
                        </div>
                        <hr class="my-[6px] mx-[5px] border-[#d2d2d2] shrink-0">
                        <div class="grid grid-cols-[20px_83px_13px_20px_82px_7px] gap-y-[5px] items-center pl-[3px] shrink-0">
                            <svg class="size-4 overflow-visible" viewBox="0 0 16 16"><text x="1" y="10" font-size="11" font-weight="600" fill="#445">a</text><text x="8" y="10" font-size="11" font-weight="600" fill="#445">b</text><path d="M0 12.500h16M2 11v3M14 11v3" stroke="#445"/></svg>
                            <div class="flex w-[76px] h-[23px] border border-[#7a7a7a] bg-white"><input aria-label="Character spacing" value="0,0 %" class="min-w-0 flex-1 pl-[2px]"><span class="flex flex-col" data-step="stack"></span></div><i data-box></i>
                            <svg class="size-4" viewBox="0 0 16 16"><path d="M1 3l3 4M4 3L1 7M6 3l3 4M9 3L6 7M11 3l3 4M14 3l-3 4M1 10.500h14M3 9l-2 1.500L3 12M13 9l2 1.500-2 1.500" stroke="#445" fill="none"/></svg>
                            <div class="flex w-[75px] h-[23px] border border-[#7a7a7a] bg-white"><input aria-label="Word spacing" value="100,0 %" class="min-w-0 flex-1 pl-[2px]"><span class="flex flex-col" data-step="stack"></span></div><i data-box></i>
                            <svg class="size-4 overflow-visible" viewBox="0 0 16 16"><text x="1" y="10" font-size="11" font-weight="600" fill="#445">a</text><path d="M8.500 4.500h6v4h-6zM11.500 1v11M0 12.500h15" stroke="#445" fill="none" stroke-width="1.200"/></svg>
                            <div class="flex w-[76px] h-[23px] border border-[#7a7a7a] bg-white"><input aria-label="Language spacing" value="0,0 %" class="min-w-0 flex-1 pl-[2px]"><span class="flex flex-col" data-step="stack"></span></div><i data-box></i>
                        </div>
                        <button aria-label="More paragraph options" class="grid place-items-center mt-[7px] h-[15px] shrink-0 bg-[#e9e9e9]"><svg class="w-2 h-[5px]" viewBox="0 0 8 5"><path d="M0 0h8L4 4.500z"/></svg></button>

                        <h3 class="flex items-center mt-[6px] h-6 shrink-0 border-t-2 border-[#a0a0a0] pl-[5px] pr-[5px] font-bold"><svg class="w-2 h-[10px] mr-[11px]" viewBox="0 0 8 10"><path d="M.5 5L4 1.500 7.500 5M.5 9L4 5.500 7.500 9" fill="none" stroke="#556" stroke-width="1.400"/></svg>Frame<i data-box class="ml-auto"></i></h3>
                        <div class="grid grid-cols-[20px_60px_38px_31px_38px_31px_7px] items-center h-[23px] mt-[5px] pl-[3px] shrink-0">
                            <svg class="size-4 overflow-visible" viewBox="0 0 16 16"><path d="M1.500 1.500h13v13h-13z" fill="#e8a33a" stroke="#8a7040" stroke-dasharray="2 2"/><text x="3.500" y="13" font-size="13" font-weight="700" fill="#33333f">A</text></svg>
                            <button aria-label="Background color" class="flex w-[53px] h-[23px] border border-[#acacac] bg-white"><i class="w-[30px] h-4 m-[2px] bg-black"></i><i class="ml-auto w-4 h-full border-l border-[#acacac] grid place-items-center"><svg class="w-2 h-[5px]" viewBox="0 0 8 5"><path d="M0 0h8L4 4.500z"/></svg></i></button><i data-box></i>
                            <button aria-label="Vertical alignment" class="grid place-items-center w-[23px] h-[23px]"><svg class="size-4 overflow-visible" viewBox="0 0 16 16"><path d="M.5.500h15v15H.500z" fill="#fff" stroke="#889"/><path d="M1 3h14M1 6h14M1 9h14M1 12h14" stroke="#889"/><text x="3" y="13" font-size="14" font-weight="700" fill="#22222e">A</text></svg></button><i data-box></i>
                            <button aria-label="Text frame alignment" class="relative grid place-items-center w-[23px] h-[23px]"><svg class="size-4" viewBox="0 0 16 16"><path d="M2.500 2.500h11v11h-11z" fill="#fff" stroke="#556"/><path d="M4 4.500h8M4 7h8" stroke="#223" stroke-width="1.500"/><path d="M1 1h2v2H1zM13 1h2v2h-2zM1 13h2v2H1z" fill="#334"/></svg><svg class="absolute right-0 bottom-0 size-[5px]"><use href="#fly"/></svg></button><i data-box></i>
                        </div>
                        <hr class="my-[6px] mx-[5px] border-[#d2d2d2] shrink-0">
                        <div class="grid grid-cols-[20px_60px_38px_31px_38px_31px_7px] items-center h-[23px] pl-[3px] shrink-0">
                            <svg class="size-4" viewBox="0 0 16 16"><path d="M1.500 1.500h13v13h-13z" fill="#fff" stroke="#778" stroke-dasharray="2 1"/><path d="M6 1v14M10.500 1v14M1.500 1v14M14.500 1v14" stroke="#556"/></svg>
                            <div class="flex w-[53px] h-[23px] border border-[#7a7a7a] bg-white"><input aria-label="Columns" value="1" class="min-w-0 flex-1 pl-[2px]"><span class="flex flex-col" data-step="stack"></span></div><i data-box></i>
                            <button aria-label="Balance columns" class="grid place-items-center w-[23px] h-[23px]"><svg class="size-4" viewBox="0 0 16 16"><path d="M0 2.500h7M0 5.500h7M0 8.500h7M0 11.500h7M0 14.500h7M9 2.500h7M9 5.500h7M9 8.500h7M9 11.500h7M9 14.500h7" stroke="#c0c0c0"/></svg></button><i data-box></i>
                            <button aria-label="Column settings" class="grid place-items-center w-[23px] h-[23px]"><svg class="w-[10px] h-[2px] mt-2" viewBox="0 0 10 2"><path d="M0 0h2v2H0zM4 0h2v2H4zM8 0h2v2H8z" fill="#445"/></svg></button><i data-box></i>
                        </div>
                    </div>
                    <div class="flex flex-col items-center w-4 ml-px mr-px bg-[#f0f0f0]">
                        <button aria-label="Scroll up" class="grid place-items-center h-[17px] shrink-0"><svg class="w-[10px] h-2"><use href="#arrow"/></svg></button>
                        <div class="w-full grow-[170] basis-0"></div>
                        <div class="w-full grow-[331] basis-0 bg-[#cdcdcd]"></div>
                        <button aria-label="Scroll down" class="grid place-items-center h-[17px] shrink-0"><svg class="w-[10px] h-2 rotate-180"><use href="#arrow"/></svg></button>
                    </div>
                </div>
            </div>
            <!-- docker tabs -->
            <div class="flex flex-col w-5 shrink-0 border-l-2 border-[#4fb4dc] bg-[#e9e9e9]">
                <button class="flex flex-col items-center gap-1 h-[71px] pt-[3px] shrink-0 bg-[#d7d7d7] border-b border-[#f3f3f3]"><svg class="size-[15px] shrink-0" viewBox="0 0 16 16"><path d="M1.500 1v11l3-3 2 5 2-1-2-4h4z" fill="#fff" stroke="#334"/><path d="M9 2q3-3 5 0t-3 5v2" fill="none" stroke="#334" stroke-width="1.500"/></svg><span class="[writing-mode:vertical-rl]">Hints</span></button>
                <button class="flex flex-col items-center gap-1 h-[126px] pt-1 shrink-0 bg-[#d7d7d7] border-b border-[#f3f3f3]"><svg class="size-[15px] shrink-0" viewBox="0 0 16 16"><path d="M6.500 5.500h8v9h-8z" fill="#9a9ab2" stroke="#778"/><path d="M1 7l5-5 5 5-5 5z" fill="#fff" stroke="#667"/><path d="M2 8h5l-1 4z" fill="#e8a33a"/><path d="M8 10l5 3" stroke="#fff" stroke-width="2"/></svg><span class="[writing-mode:vertical-rl]">Object Proper...</span></button>
                <button aria-label="Object Manager" class="grid place-items-center h-[26px] pb-[2px] shrink-0 bg-[#d7d7d7] border-b border-[#f3f3f3]"><svg class="size-4" viewBox="0 0 16 16"><path d="M1.500 2v13M2 2.500h4M8 5v7.500h3M8 7h3" stroke="#445" stroke-dasharray="1 1" fill="none"/><path d="M5.500 1.500h4v4h-4zM11.500 4.500h4v4h-4zM11.500 10.500h4v4h-4z" fill="#99a" stroke="#556"/></svg></button>
                <button aria-label="Object Styles" class="grid place-items-center h-[26px] pb-[2px] shrink-0 bg-[#d7d7d7] border-b border-[#f3f3f3]"><svg class="size-4" viewBox="0 0 16 16"><path d="M3 11l4-7 6-3 1 5-6 6z" fill="#f4f4fb" stroke="#556"/><path d="M3 11l6-6M2 10q-2 5 3 4t9-1" stroke="#556" stroke-width="1.300" fill="none"/></svg></button>
                <button aria-label="Contour" class="grid place-items-center h-[26px] pb-[2px] shrink-0 bg-[#d7d7d7] border-b border-[#f3f3f3]"><svg class="size-4" viewBox="0 0 16 16"><path d="M1.500 1.500h13v13h-13zM5.500 5.500h5v5h-5zM1.500 1.500l4 4M14.500 1.500l-4 4M1.500 14.500l4-4M14.500 14.500l-4-4" fill="#f0f0f8" stroke="#778" stroke-width="1.300"/></svg></button>
                <button class="flex flex-col items-center gap-[3px] h-[122px] pt-1 shrink-0 bg-[#cce0ff] border-b border-[#f3f3f3]"><svg class="size-[15px] shrink-0" viewBox="0 0 16 16"><path d="M2.500 15.500L6.500 4.500h3l4 11h-2.500l-1-3H6l-1 3z" fill="#fff" stroke="#667"/><path d="M0 2.500h4M12 2.500h4M2.500 1v3M13.500 1v3" stroke="#334"/></svg><span class="[writing-mode:vertical-rl]">Text Properties</span></button>
                <button aria-label="Extrude" class="grid place-items-center h-[26px] pb-[2px] shrink-0 bg-[#d7d7d7] border-b border-[#f3f3f3]"><svg class="size-4" viewBox="0 0 16 16"><path d="M2 5l4-3h8v9l-3 3z" fill="#556"/><path d="M2.500 5.500h8v8h-8z" fill="url(#fade)" stroke="#889"/></svg></button>
                <button aria-label="Color Palettes" class="grid place-items-center h-[26px] pb-[2px] shrink-0 bg-[#d7d7d7] border-b border-[#f3f3f3]"><svg class="size-4" viewBox="0 0 16 16"><path d="M1.500 4.500h5l2-2h6l-2 11h-10z" fill="#f4f4fb" stroke="#778"/><path d="M4 6h2v2H4z" fill="#d33"/><path d="M8 5h2v2H8z" fill="#29c"/><path d="M11 7h2v2h-2z" fill="#393"/></svg></button>
                <button aria-label="Lens" class="grid place-items-center h-[26px] pb-[2px] shrink-0 bg-[#d7d7d7] border-b border-[#f3f3f3]"><svg class="size-4" viewBox="0 0 16 16"><circle cx="8" cy="8" r="6.500" fill="url(#fade)" stroke="#667"/></svg></button>
                <button aria-label="Transformations" class="grid place-items-center h-[26px] pb-[2px] shrink-0 bg-[#d7d7d7]"><svg class="size-4" viewBox="0 0 16 16"><path d="M4 15q-4-3-2-6t7-2" fill="none" stroke="#445" stroke-width="1.800"/><path d="M8 5v5l4-3z" fill="#445"/><path d="M11.500 1v8M7.500 5h8M10 2.500L11.500 1 13 2.500M14 3.500L15.500 5 14 6.500" stroke="#445" fill="none"/></svg></button>
                <button aria-label="Add docker" class="mx-auto mt-4"><svg class="size-[18px]"><use href="#plus"/></svg></button>
            </div>
        </div>
    </aside>

    <!-- color palette -->
    <div class="flex flex-col items-center w-[18px] shrink-0 border-l border-[#d4d4d4]">
        <svg class="mt-[5px] w-3 h-[2px] shrink-0" viewBox="0 0 12 2"><path d="M0 1h12" stroke="#aaa" stroke-width="2" stroke-dasharray="2 2"/></svg>
        <button aria-label="Palette options" class="mt-[3px]"><svg class="w-[6px] h-[10px]" viewBox="0 0 6 10"><path d="M0 0v10l5.500-5z"/></svg></button>
        <button aria-label="Eyedropper" class="mt-1"><svg class="size-[13px]"><use href="#drop"/></svg></button>
        <button aria-label="Scroll colors up" class="mt-1 mb-[5px]"><svg class="w-[10px] h-2" viewBox="0 0 10 8"><path d="M1 6.500l4-4 4 4" fill="none" stroke="#ccc" stroke-width="2"/></svg></button>
        <div id="palette" class="flex flex-col w-full h-[486px] overflow-hidden shrink-0"></div>
        <button aria-label="Scroll colors down" class="mt-1"><svg class="w-[10px] h-2" viewBox="0 0 10 8"><path d="M1 1.500l4 4 4-4" fill="none" stroke="#aaa" stroke-width="2"/></svg></button>
        <button aria-label="Expand colors" class="mt-[10px]"><svg class="w-[9px] h-2" viewBox="0 0 9 8"><path d="M.5 0l4 4-4 4M4.500 0l4 4-4 4" fill="none" stroke="#aaa"/></svg></button>
    </div>
</main>

<!-- status bar -->
<footer class="flex items-center h-9 shrink-0 border-t border-[#d4d4d4] border-b-2 border-b-[#0b1620] pl-[5px] pr-[9px]">
    <span>( 125,761; 83,674 )</span>
    <button aria-label="Status menu" class="ml-px"><svg class="size-[14px]" viewBox="0 0 14 14"><path d="M.5.500h13v13H.500z" fill="#fff" stroke="#000"/><path d="M5 3v8l5-4z"/></svg></button>
    <div class="ml-auto flex items-center">
        <svg class="size-[15px] mr-[13px]" viewBox="0 0 15 15"><path d="M.5.500h14v11H.500z" fill="#d99aa5" stroke="#556"/><path d="M1 6h13v5H1z" fill="#a9c0e0"/><circle cx="7.500" cy="6" r="2.500" fill="#fff" stroke="#223"/><path d="M3 14h9" stroke="#99a" stroke-width="2"/></svg>
        <svg class="size-4 mr-[6px]"><use href="#bucket"/></svg>
        <svg class="size-[18px] mr-1"><use href="#none"/></svg>
        <span class="w-[157px]">None</span>
        <i class="w-px h-[22px] bg-[#d2d2d2] mr-[6px]"></i>
        <svg class="size-4 mr-[6px]" viewBox="0 0 16 16"><path d="M8 1q4 5 3 9l-1 2H6l-1-2Q4 6 8 1z" fill="#fff" stroke="#556"/><path d="M8 3v6M4 14h8" stroke="#334" stroke-width="1.500"/></svg>
        <i class="size-[18px] mr-1 bg-[#3f0083] border border-[#a58cc8]"></i>
        <span class="whitespace-pre">C:100 M:100 Y:0 K:0  0,020 cm</span>
    </div>
</footer>

<script>
    // stepper buttons
    const tri = up => '<svg class="w-[6px] h-1' + (up ? ' rotate-180' : '') + '"><use href="#caret"/></svg>';
    document.querySelectorAll('[data-step]').forEach(el => {
        if (el.dataset.step === 'side') {
            el.innerHTML = '<button aria-label="Decrease" class="grid place-items-center w-[9px] h-[13px] m-px mr-0 bg-[#e6e6e6] border border-[#acacac]">' + tri(false) + '</button>' +
                '<button aria-label="Increase" class="grid place-items-center w-[9px] h-[13px] m-px bg-[#e6e6e6] border border-[#acacac]">' + tri(true) + '</button>';
        } else {
            el.innerHTML = '<button aria-label="Increase" class="grid place-items-center w-[17px] h-[10px] mt-px mr-px bg-[#e6e6e6] border border-[#acacac]">' + tri(true) + '</button>' +
                '<button aria-label="Decrease" class="grid place-items-center w-[17px] h-[10px] -mt-px mr-px bg-[#e6e6e6] border border-[#acacac]">' + tri(false) + '</button>';
        }
    });

    // style state markers
    document.querySelectorAll('[data-box]').forEach(el => {
        el.classList.add('size-[7px]', 'shrink-0', 'bg-white', 'border', 'border-[#acacac]');
    });

    // rulers and grid, 2.95px per centimetre
    const U = 2.95, OX = -74.4, OY = 337.3;
    let s = '';
    for (let v = 20; v < 400; v += 2) {
        if (v % 10) s += `<path d="M${OX + v * U} 16v1.500" stroke="#888"/>`;
    }
    for (let v = 30; v < 400; v += 10) {
        const x = OX + v * U;
        s += `<path d="M${x} ${v % 20 ? 16 : 13}v5" stroke="#888"/>`;
        if (v % 20 === 0 && v <= 340) s += `<text x="${x}" y="12" text-anchor="middle" fill="#888">${v}</text>`;
    }
    s += '<text x="965" y="12" fill="#888">centimeters</text><path d="M295.5 2v16" stroke="#000" stroke-dasharray="3 2"/>';
    document.getElementById('hruler').innerHTML = s;

    s = '';
    for (let v = -70; v < 115; v += 2) {
        if (v % 10) s += `<path d="M16 ${OY - v * U}h1.500" stroke="#888"/>`;
    }
    for (let v = -60; v < 115; v += 10) {
        const y = OY - v * U;
        s += `<path d="M${v % 20 ? 15 : 12} ${y}h5" stroke="#888"/>`;
        if (v % 20 === 0 && v >= -40) s += `<text transform="translate(12 ${y}) rotate(-90)" text-anchor="middle" fill="#888">${Math.abs(v)}</text>`;
    }
    s += '<text transform="translate(12 522) rotate(-90)" fill="#888">centimeters</text><path d="M2 88.500h15" stroke="#000" stroke-dasharray="3 2"/>';
    document.getElementById('vruler').innerHTML = s;

    s = '';
    for (let v = 25; v < 700; v += 5) s += `<path d="M${OX + v * U} 0v2000" stroke="#c2c2c2"/>`;
    for (let v = -300; v < 120; v += 5) s += `<path d="M0 ${OY - v * U}h2000" stroke="#c2c2c2"/>`;
    s += '<path d="M811 46h6v296H-1v-5h812z" fill="#bebebe"/><path d="M0 42.500h810.500V337" fill="none" stroke="#aaa"/>';
    document.getElementById('canvas').innerHTML = s;

    // swatches
    const none = '<button aria-label="No color" class="size-[18px] shrink-0 -mb-px -mr-px"><svg class="size-[18px]"><use href="#none"/></svg></button>';
    const swatch = c => `<button aria-label="${c}" class="size-[18px] shrink-0 -mb-px -mr-px border border-[#555]" style="background:${c}"></button>`;
    document.getElementById('docpalette').innerHTML = none +
        ['#c4007f', '#b1b1b3', '#c6c7c8', '#403838', '#dc4895', '#fff200'].map(swatch).join('');
    document.getElementById('palette').innerHTML = none +
        ['#2a1d1b', '#3f3b3a', '#595453', '#6b6a6a', '#828283', '#9a9a9b', '#b0b0b2', '#c4c5c6', '#d9d9d9', '#ededed', '#ffffff',
         '#3f0083', '#009ce4', '#009a46', '#fff200', '#ff0019', '#ff0080', '#cf3380', '#ff7f1a', '#ffabab', '#8a7268',
         '#d2c5e2', '#ac8fc0', '#6d83bd', '#8660a8', '#977fae', '#50618f', '#62496a'].map(swatch).join('');
</script>
</body>
</html>
